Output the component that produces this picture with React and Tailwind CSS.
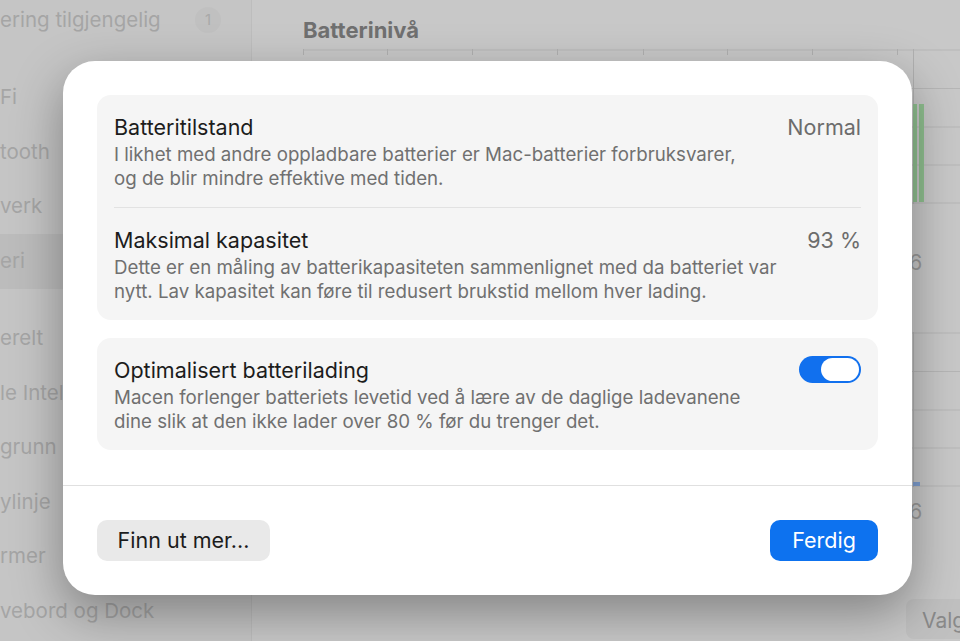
import React from 'react';

const sidebarTop = [{ label: 'ering tilgjengelig', badge: '1' }];
const sidebarA = ['Fi', 'tooth', 'verk', 'eri'];
const sidebarB = ['erelt', 'le Intel', 'grunn', 'ylinje', 'rmer', 'vebord og Dock'];

function SidebarItem({ label, badge, selected }) {
  return (
    <div className={`h-[54.5px] flex items-center pr-[30px] ${selected ? 'bg-[#bcbcbc] rounded-r-[10px]' : ''}`}>
      <span className="whitespace-nowrap">{label}</span>
      {badge && (
        <span className="ml-auto w-[26px] h-[26px] rounded-full bg-[#c0c0c0] text-[15px] text-[#a9a9a9] flex items-center justify-center">
          {badge}
        </span>
      )}
    </div>
  );
}

function Chart({ bars }) {
  const lines = [0, 38.5, 77, 115, 153];
  return (
    <svg width="660" height="155" className="block">
      {lines.map((y) => (
        <line key={y} x1="0" x2="660" y1={y + 1} y2={y + 1} stroke="#b6b6b6" strokeWidth="1" />
      ))}
      {[0, 84, 169, 254, 340, 424, 509, 594].map((x) => (
        <line key={x} x1={x + 0.5} x2={x + 0.5} y1="0" y2="6" stroke="#b0b0b0" strokeWidth="1" />
      ))}
      <line x1="610.5" x2="610.5" y1="0" y2="155" stroke="#b0b0b0" strokeWidth="1" />
      {bars}
    </svg>
  );
}

function Row({ title, value, children, toggle }) {
  return (
    <div className="flex items-start justify-between pt-5 pb-4">
      <div>
        <div className="text-[21.5px] leading-[24px] text-[#1c1c1c]">{title}</div>
        <div className="mt-1 text-[18.7px] leading-[24px] text-[#707070]">{children}</div>
      </div>
      {value && <div className="text-[21.5px] leading-[24px] text-[#6c6c6c]">{value}</div>}
      {toggle && (
        <div className="mt-[-2px] w-[62px] h-[27px] rounded-full bg-[#1170ee] p-[2px] flex justify-end">
          <div className="w-[38px] h-[23px] rounded-full bg-white" />
        </div>
      )}
    </div>
  );
}

export default function App() {
  return (
    <div className="w-[960px] h-[641px] relative overflow-hidden bg-[#c8c8c8] font-['Inter',sans-serif]">
      <div className="flex h-full">
        <aside className="w-[252px] shrink-0 bg-[#c5c5c5] border-r border-[#bdbdbd] overflow-hidden text-[20.5px] text-[#a5a5a5]">
          <div className="-mt-[7px]">
            {sidebarTop.map((it) => (
              <SidebarItem key={it.label} label={it.label} badge={it.badge} />
            ))}
          </div>
          <div className="mt-[23px]">
            {sidebarA.map((l) => (
              <SidebarItem key={l} label={l} selected={l === 'eri'} />
            ))}
          </div>
          <div className="mt-[23px]">
            {sidebarB.map((l) => (
              <SidebarItem key={l} label={l} />
            ))}
          </div>
        </aside>

        <main className="flex-1 pl-[51px] pt-[18px] overflow-hidden">
          <h2 className="text-[22px] leading-[24px] font-bold text-[#707070]">Batterinivå</h2>
          <div className="mt-[7px]">
            <Chart
              bars={
                <>
                  <rect x="610" y="55" width="4" height="98" fill="#8fbf8f" />
                  <rect x="616" y="55" width="5" height="98" fill="#8fbf8f" />
                </>
              }
            />
          </div>
          <div className="h-[128px] relative">
            <span className="absolute left-[593px] top-[43px] text-[21px] text-[#9a9a9a]">06</span>
          </div>
          <Chart bars={<rect x="610" y="150" width="7" height="4" fill="#7f9fd0" />} />
          <div className="h-[110px] relative">
            <span className="absolute left-[593px] top-[9px] text-[21px] text-[#9a9a9a]">06</span>
            <div className="absolute left-[603px] top-[112px] w-[80px] h-[40px] rounded-[8px] bg-[#c0c0c0] px-[16px] pt-[6px] text-[21px] text-[#8a8a8a]">
              Valg
            </div>
          </div>
        </main>
      </div>

      <div className="absolute left-[63px] top-[61px] w-[849px] h-[534px] bg-white rounded-[32px] shadow-[0_18px_50px_rgba(0,0,0,0.35)] flex flex-col">
        <div className="px-[34px] pt-[34px] pb-[35px] flex flex-col gap-[18px]">
          <div className="bg-[#f5f5f5] rounded-[14px] px-[17px]">
            <Row title="Batteritilstand" value="Normal">
              I likhet med andre oppladbare batterier er Mac-batterier forbruksvarer,
              <br />
              og de blir mindre effektive med tiden.
            </Row>
            <div className="h-px bg-[#e2e2e2]" />
            <Row title="Maksimal kapasitet" value="93 %">
              Dette er en måling av batterikapasiteten sammenlignet med da batteriet var
              <br />
              nytt. Lav kapasitet kan føre til redusert brukstid mellom hver lading.
            </Row>
          </div>
          <div className="bg-[#f5f5f5] rounded-[14px] px-[17px]">
            <Row title="Optimalisert batterilading" toggle>
              Macen forlenger batteriets levetid ved å lære av de daglige ladevanene
              <br />
              dine slik at den ikke lader over 80 % før du trenger det.
            </Row>
          </div>
        </div>
        <div className="h-px bg-[#e0e0e0]" />
        <div className="flex-1 px-[34px] flex items-center justify-between">
          <button className="h-[41px] w-[173px] rounded-[10px] bg-[#e9e9e9] text-[21.5px] text-[#1c1c1c]">
            Finn ut mer...
          </button>
          <button className="h-[41px] w-[108px] rounded-[10px] bg-[#0d72ef] text-[21.5px] text-white">
            Ferdig
          </button>
        </div>
      </div>
    </div>
  );
}
